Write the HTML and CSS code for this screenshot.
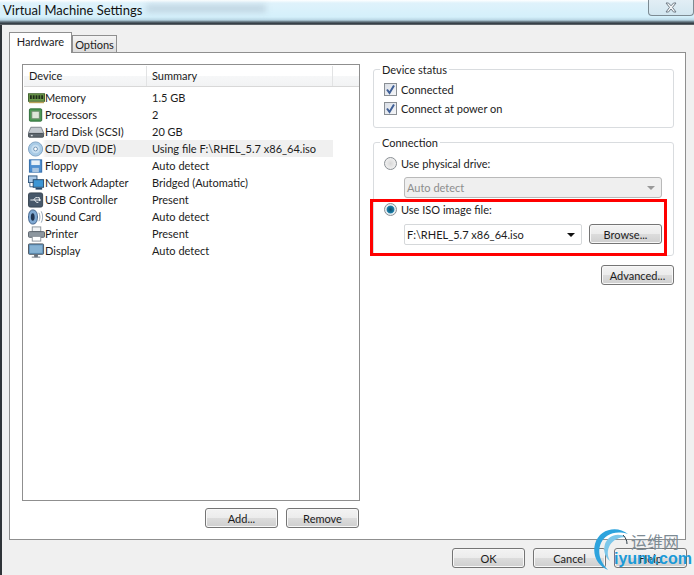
FILE: index.html
```html
<!DOCTYPE html>
<html lang="en">
<head>
<meta charset="utf-8">
<title>Virtual Machine Settings</title>
<link rel="stylesheet" href="styles.css">
</head>
<body>
<div class="window">
  <header class="titlebar">
    <span class="title">Virtual Machine Settings</span>
    <span class="title-blur"></span>
    <span class="close">
      <svg width="14" height="11" viewBox="0 0 14 11"><path d="M2 1h2.500l2.500 2.800 2.500-2.800h2.500l-3.500 4.400 3.500 4.600h-2.500l-2.500-3-2.500 3h-2.500l3.500-4.600z" fill="#f4f6f8" stroke="#6f7b85" stroke-width="1"/></svg>
    </span>
  </header>
  <main class="client">
    <nav class="tabs">
      <div class="tab tab-active">Hardware</div>
      <div class="tab">Options</div>
    </nav>
    <section class="panel">
      <div class="left">
        <div class="list">
          <div class="list-head">
            <div class="col col-device">Device</div>
            <div class="col col-summary">Summary</div>
            <div class="col col-rest"></div>
          </div>
          <div class="row">
            <svg class="ico" viewBox="0 0 18 16"><rect x="0.500" y="3.500" width="17" height="8" fill="#6c9a4c" stroke="#3d5f2c"/><path d="M2 5h2v4H2zM5 5h2v4H5zM8 5h2v4H8zM11 5h2v4h-2zM14 5h2v4h-2z" fill="#1f2d18"/><path d="M1 12h16v1.500H1z" fill="#b9a25a"/></svg>
            <span class="name">Memory</span><span class="val">1.5 GB</span>
          </div>
          <div class="row">
            <svg class="ico" viewBox="0 0 18 16"><rect x="1.500" y="1.500" width="13" height="13" rx="1" fill="#4d9a55" stroke="#2c6a36"/><rect x="4" y="4" width="8" height="8" fill="#dfe6da" stroke="#6f8c6c"/></svg>
            <span class="name">Processors</span><span class="val">2</span>
          </div>
          <div class="row">
            <svg class="ico" viewBox="0 0 18 16"><path d="M3 3h11l3 7H0z" fill="#c3c9cf" stroke="#7b838a"/><rect x="0.500" y="9.500" width="16" height="4" rx="1" fill="#5d666e" stroke="#444c53"/><rect x="3" y="11" width="2" height="1.500" fill="#d8dde0"/></svg>
            <span class="name">Hard Disk (SCSI)</span><span class="val">20 GB</span>
          </div>
          <div class="row row-selected">
            <svg class="ico" viewBox="0 0 18 16"><circle cx="8" cy="8" r="7.500" fill="#a9cbe6" stroke="#7ea3c4"/><circle cx="8" cy="8" r="4.500" fill="#c7def0"/><circle cx="8" cy="8" r="2" fill="#ffffff" stroke="#6f93b4"/></svg>
            <span class="name">CD/DVD (IDE)</span><span class="val">Using file F:\RHEL_5.7 x86_64.iso</span>
          </div>
          <div class="row">
            <svg class="ico" viewBox="0 0 18 16"><rect x="1.500" y="1.500" width="13" height="13" fill="#4f8fd0" stroke="#2f6aa8"/><rect x="3.500" y="2" width="9" height="5" fill="#e9f1f8"/><rect x="4.500" y="10" width="7" height="4.500" fill="#aac6e2"/></svg>
            <span class="name">Floppy</span><span class="val">Auto detect</span>
          </div>
          <div class="row">
            <svg class="ico" viewBox="0 0 18 16"><rect x="0.500" y="0.500" width="9" height="7" fill="#a9c8e6" stroke="#33597f"/><path d="M2 8v4h4" fill="none" stroke="#33597f"/><rect x="5.500" y="4.500" width="11" height="8" fill="#3d96d4" stroke="#26496b"/><path d="M8 14h7" stroke="#26496b" stroke-width="2"/></svg>
            <span class="name">Network Adapter</span><span class="val">Bridged (Automatic)</span>
          </div>
          <div class="row">
            <svg class="ico" viewBox="0 0 18 16"><rect x="0.500" y="0.500" width="15" height="15" rx="2" fill="#47586a" stroke="#36434f"/><path d="M2.500 8h11M10 5.500h2v2M6 8l2-2.500h2M7 8l2 2.500h2" fill="none" stroke="#f2f5f8"/><path d="M13.500 8l-2-1.500v3z" fill="#f2f5f8"/></svg>
            <span class="name">USB Controller</span><span class="val">Present</span>
          </div>
          <div class="row">
            <svg class="ico" viewBox="0 0 18 16"><path d="M5 0.500c4 0 5 4 5 7.500s-1 7.500-5 7.500c-3 0-4.500-3.500-4.500-7.500S2 0.500 5 0.500z" fill="#7fa9d3" stroke="#3f6088"/><ellipse cx="5" cy="8" rx="2" ry="4" fill="#1f3350"/><path d="M11.500 3.500c1.500 2.500 1.500 6.500 0 9M14 2c2 3.500 2 8.500 0 12" fill="none" stroke="#97a8b8"/></svg>
            <span class="name">Sound Card</span><span class="val">Auto detect</span>
          </div>
          <div class="row">
            <svg class="ico" viewBox="0 0 18 16"><rect x="4.500" y="0.500" width="9" height="5" fill="#f2f4f6" stroke="#8a929a"/><rect x="0.500" y="5.500" width="17" height="6" rx="1" fill="#8d979f" stroke="#59626a"/><rect x="4.500" y="10.500" width="9" height="5" fill="#ffffff" stroke="#8a929a"/></svg>
            <span class="name">Printer</span><span class="val">Present</span>
          </div>
          <div class="row">
            <svg class="ico" viewBox="0 0 18 16"><rect x="0.500" y="0.500" width="16" height="11" rx="1" fill="#5f93bd" stroke="#4a545e"/><rect x="2" y="2" width="13" height="8" fill="#86b2d3"/><path d="M7 12h3v2H7zM4 14.500h9" fill="#66707a" stroke="#66707a"/></svg>
            <span class="name">Display</span><span class="val">Auto detect</span>
          </div>
        </div>
        <div class="btn-row list-actions">
          <button class="btn" type="button">Add...</button>
          <button class="btn" type="button">Remove</button>
        </div>
      </div>
      <div class="right">
        <fieldset class="group group-status">
          <legend>Device status</legend>
          <label class="opt"><span class="check"><svg width="11" height="11" viewBox="0 0 11 11"><path d="M2 5.500l2.500 3.500L9 1.500" fill="none" stroke="#3f5f96" stroke-width="2"/></svg></span>Connected</label>
          <label class="opt"><span class="check"><svg width="11" height="11" viewBox="0 0 11 11"><path d="M2 5.500l2.500 3.500L9 1.500" fill="none" stroke="#3f5f96" stroke-width="2"/></svg></span>Connect at power on</label>
        </fieldset>
        <fieldset class="group group-conn">
          <legend>Connection</legend>
          <label class="opt opt-radio"><span class="radio"></span>Use physical drive:</label>
          <div class="combo combo-disabled"><span>Auto detect</span><i class="arrow"></i></div>
          <div class="iso">
            <label class="opt opt-radio"><span class="radio radio-on"></span>Use ISO image file:</label>
            <div class="iso-line">
              <div class="combo combo-iso"><span>F:\RHEL_5.7 x86_64.iso</span><i class="arrow"></i></div>
              <button class="btn" type="button">Browse...</button>
            </div>
          </div>
          <div class="redbox"></div>
        </fieldset>
        <div class="btn-row adv">
          <button class="btn" type="button">Advanced...</button>
        </div>
      </div>
    </section>
    <footer class="btn-row dialog-actions">
      <button class="btn" type="button">OK</button>
      <button class="btn" type="button">Cancel</button>
      <button class="btn" type="button">Help</button>
    </footer>
  </main>
  <div class="watermark">
    <svg class="wm-arc" width="42" height="46" viewBox="0 0 42 46"><path d="M36 8C25-1 7 3 3 18c-3 12 3 22 13 26C8 36 5 26 9 17c4-8 13-13 27-9z" fill="#2da3dd"/><path d="M34 11c-9-5-18-1-21 7-2 7 0 13 5 17-3-5-3-11 0-16 3-5 9-8 16-8z" fill="#7cc7ea"/><path d="M31 9c3 3 4 6 4 9" fill="none" stroke="#2d3b45" stroke-width="1"/></svg>
    <span class="wm-cn">运维网</span>
    <span class="wm-en">iyunv.com</span>
  </div>
</div>
</body>
</html>
```
FILE: styles.css
```css
* { box-sizing: border-box; }
html, body { margin: 0; padding: 0; }
body {
  width: 694px;
  height: 575px;
  overflow: hidden;
  font-family: "Lato", "Open Sans", sans-serif;
  font-size: 11px;
  color: #1c1c1c;
  background: #f0f0f0;
}
.window { position: relative; width: 694px; height: 575px; display: flex; flex-direction: column; }
.titlebar {
  position: relative;
  height: 25px;
  flex: none;
  padding: 1px 0 0 3px;
  background: linear-gradient(to bottom, #ffffff 0, #dff2fb 3px, #d4f0fb 17px, #b9d6e4 20px, #5b6b75 22px, #2b3238 24px, #8b9297 25px);
}
.title { font-size: 13px; line-height: 18px; color: #111; }
.title-blur {
  position: absolute;
  left: 146px;
  top: 5px;
  width: 120px;
  height: 7px;
  background: #b4c8d6;
  filter: blur(3px);
  opacity: .75;
}
.close {
  position: absolute;
  right: 0;
  top: 0;
  width: 46px;
  height: 16px;
  display: flex;
  justify-content: center;
  align-items: center;
  background: linear-gradient(to bottom, #e2eef5, #d2e6f0);
  border: 1px solid #7c8a92;
  border-top: 0;
  border-radius: 0 0 4px 4px;
}
.client {
  flex: 1;
  min-height: 0;
  padding: 7px 7px 0 7px;
  border-left: 2px solid #2f3438;
  display: flex;
  flex-direction: column;
}
.tabs { display: flex; align-items: flex-end; height: 20px; flex: none; position: relative; z-index: 1; }
.tab {
  height: 17px;
  line-height: 17px;
  width: 45px;
  text-align: center;
  border: 1px solid #8f8f8f;
  border-bottom: 0;
  background: linear-gradient(to bottom, #f4f4f4, #dcdcdc);
}
.tab-active {
  width: 63px;
  height: 21px;
  line-height: 18px;
  background: #fff;
  margin-bottom: -1px;
}
.panel {
  height: 488px;
  flex: none;
  width: 677px;
  background: #fff;
  border: 1px solid #8f8f8f;
  display: grid;
  grid-template-columns: 351px 1fr;
  padding: 11px 11px 0 12px;
}
.left { display: flex; flex-direction: column; width: 338px; }
.list { height: 437px; border: 1px solid #8f8f8f; padding: 1px 0 0 1px; }
.list-head { display: flex; height: 21px; margin-bottom: 2px; border-bottom: 1px solid #d8d8d8; background: linear-gradient(to bottom, #fff 0, #fff 50%, #f6f7f8 51%, #f2f3f4 100%); }
.col { line-height: 20px; padding-left: 5px; border-right: 1px solid #e2e3e4; }
.col-device { width: 123px; }
.col-summary { width: 186px; }
.col-rest { flex: 1; border-right: 0; }
.row { display: flex; align-items: center; height: 17px; padding-left: 4px; }
.ico { width: 17px; height: 16px; flex: none; }
.name { width: 107px; flex: none; white-space: nowrap; line-height: 17px; }
.val { white-space: nowrap; line-height: 17px; width: 180px; }
.row-selected { background: linear-gradient(to right, #fff 0, #fff 18px, #f0f0f0 22px); width: 309px; }
.btn-row { display: flex; justify-content: flex-end; gap: 8px; }
.list-actions { margin-top: 7px; margin-right: 1px; }
.btn {
  width: 73px;
  height: 20px;
  padding: 0;
  font: inherit;
  color: #1c1c1c;
  border: 1px solid #757575;
  border-radius: 3px;
  background: linear-gradient(to bottom, #f3f3f3 0, #ececec 48%, #dcdcdc 52%, #cfcfcf 100%);
  box-shadow: inset 0 0 0 1px #f8f8f8;
}
.right { display: flex; flex-direction: column; }
.group {
  position: relative;
  width: 301px;
  margin: 0;
  padding: 0;
  border: 1px solid #d9dcdf;
  border-radius: 3px;
}
.group legend { margin-left: -4px; padding: 0 2px; line-height: 13px; height: 13px; }
.group-status { height: 65px; margin-top: -1px; padding: 4px 0 0 10px; }
.group-conn { height: 120px; margin-top: 8px; padding: 4px 0 0 10px; }
.opt { display: flex; align-items: center; height: 19px; gap: 4px; white-space: nowrap; }
.opt-radio { height: 21px; }
.check {
  width: 13px; height: 13px; flex: none;
  border: 1px solid #8a8f94;
  background: linear-gradient(135deg, #d9dee6, #f5f6f8);
  display: flex; align-items: center; justify-content: center;
}
.radio {
  width: 13px; height: 13px; flex: none; border-radius: 50%;
  border: 1px solid #8a8f94;
  background: radial-gradient(circle, #d8d8d8 0, #e8e8e8 45%, #f7f7f7 100%);
}
.radio-on { background: radial-gradient(circle, #0d4a6a 0, #1c7fa8 45%, #dfeaf0 55%, #f7f7f7 100%); }
.combo {
  position: relative;
  height: 21px;
  padding: 0 0 0 2px;
  line-height: 20px;
  border: 1px solid #d5d8da;
  border-radius: 2px;
}
.combo-disabled {
  width: 258px;
  margin: 3px 0 1px 20px;
  background: #efefef;
  border-color: #b9b9b9;
  border-radius: 3px;
  color: #8d8d8d;
}
.iso-line { display: flex; gap: 7px; margin: 4px 0 0 20px; }
.combo-iso { width: 178px; background: #fff; }
.arrow {
  position: absolute;
  right: 6px;
  top: 8px;
  width: 0; height: 0;
  border: 4px solid transparent;
  border-top: 4px solid #111;
  border-bottom: 0;
}
.combo-disabled .arrow { border-top-color: #999; }
.redbox {
  position: absolute;
  left: -4px;
  top: 50px;
  width: 297px;
  height: 57px;
  border: 3px solid #ff0000;
  pointer-events: none;
}
.adv { width: 301px; margin-top: 9px; }
.dialog-actions { margin-top: 8px; width: 678px; }
.watermark { position: absolute; left: 592px; top: 526px; width: 102px; height: 46px; pointer-events: none; }
.wm-arc { position: absolute; left: 0; top: 0; }
.wm-cn { position: absolute; left: 39px; top: 6px; font: 16px/18px "Noto Sans CJK SC", sans-serif; color: #7d8b94; white-space: nowrap; }
.wm-en { position: absolute; left: 22px; top: 23px; font: bold 16px/20px "Liberation Sans", sans-serif; color: #1b9ad8; white-space: nowrap; }
```
